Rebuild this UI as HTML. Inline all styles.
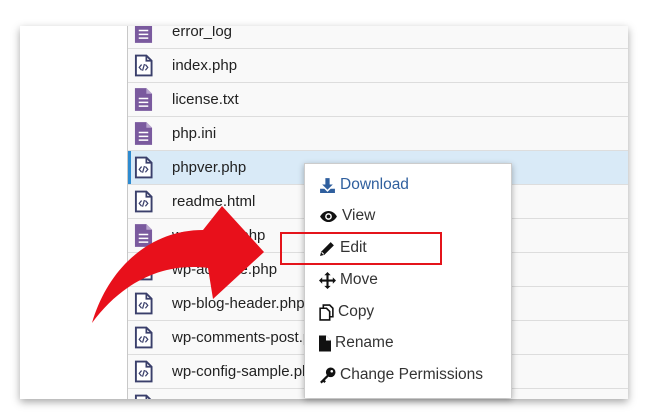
<!DOCTYPE html>
<html><head><style>
body{margin:0;width:650px;height:420px;background:#fff;position:relative;overflow:hidden;font-family:"Liberation Sans",Arial,sans-serif}
#panel{position:absolute;left:20px;top:26px;width:608px;height:373px;background:#fff;box-shadow:0 3px 8px rgba(0,0,0,.35);overflow:hidden}
#tbl{position:absolute;left:107px;top:-11px;width:501px;border-left:1px solid #c8c8c8}
.row{height:33px;border-bottom:1px solid #ddd;position:relative;font-size:15px;color:#222;background:#f9f9f9}
.row.sel{background:#d9eaf7;box-shadow:inset 3px 0 0 #2e8bd0}
.row span{position:absolute;left:44px;top:8px}
.row svg{position:absolute;left:6px;top:5px}
#menu{position:absolute;left:304px;top:163px;width:206px;height:234px;background:#fff;border:1px solid #ccc;border-bottom:none;box-shadow:0 2px 6px rgba(0,0,0,.3)}
.mi{position:absolute;left:14px;font-size:15.5px;color:#333;display:flex;align-items:center;gap:4px}
#box{position:absolute;left:280px;top:232px;width:158px;height:29px;border:2px solid #e4141b}
</style></head><body>
<div id="panel">
<div id="tbl"></div>
</div>
<svg width="0" height="0" style="position:absolute">
<defs>
<symbol id="code" viewBox="0 0 20 24"><path d="M2 1.5h11l5.5 5.5v15.5H2z" fill="#fff" stroke="#3a3f6b" stroke-width="2"/><path d="M13 1.5v5.5h5.5" fill="none" stroke="#3a3f6b" stroke-width="1.8"/><path d="M8 11l-2.5 3 2.5 3M12 11l2.5 3-2.5 3M11 10.5l-2 7" fill="none" stroke="#3a3f6b" stroke-width="1.3"/></symbol>
<symbol id="txt" viewBox="0 0 20 24"><path d="M1 0h12l6 6v18H1z" fill="#7a5a9e"/><path d="M13 0v6h6" fill="#b9a6cf"/><path d="M5 11h10M5 15h10M5 19h10" stroke="#fff" stroke-width="1.6"/></symbol>
</defs></svg>
<div id="menu">
<div class="mi" style="top:12px;color:#2f5f9e"><svg width="17" height="17" viewBox="0 0 16 16"><path d="M6 1h4v6h3l-5 5-5-5h3z" fill="#2f5f9e"/><path d="M1 11h4l3 3 3-3h4v4H1z" fill="#2f5f9e"/></svg>Download</div>
<div class="mi" style="top:43px"><svg width="19" height="15" viewBox="0 0 18 14"><path d="M1 7c4-7 12-7 16 0-4 7-12 7-16 0z" fill="#111"/><circle cx="9" cy="7" r="3.2" fill="#fff"/><circle cx="9" cy="7" r="1.8" fill="#111"/></svg>View</div>
<div class="mi" style="top:75px"><svg width="17" height="17" viewBox="0 0 16 16"><path d="M1 15l1-4 9-9 3 3-9 9z" fill="#111"/><path d="M2.5 11.5l2 2" stroke="#fff" stroke-width="1"/></svg>Edit</div>
<div class="mi" style="top:107px"><svg width="17" height="17" viewBox="0 0 16 16"><path d="M8 0l3 3H9v4h4V5l3 3-3 3V9H9v4h2l-3 3-3-3h2V9H3v2L0 8l3-3v2h4V3H5z" fill="#111"/></svg>Move</div>
<div class="mi" style="top:139px"><svg width="15" height="17" viewBox="0 0 14 16"><path d="M1 4h6l3 3v8H1z" fill="#fff" stroke="#111" stroke-width="1.5"/><path d="M4 4V1h6l3 3v8h-3" fill="none" stroke="#111" stroke-width="1.5"/></svg>Copy</div>
<div class="mi" style="top:170px"><svg width="12" height="17" viewBox="0 0 12 16"><path d="M0 0h7l5 5v11H0z" fill="#111"/><path d="M7 0v5h5" fill="#fff"/></svg>Rename</div>
<div class="mi" style="top:202px"><svg width="17" height="17" viewBox="0 0 16 16"><circle cx="11" cy="5" r="4.5" fill="#111"/><path d="M8 7L1 14l1.5 1.5L4 14l1 1 1.5-1.5-1-1L10 8z" fill="#111"/><circle cx="12" cy="4" r="1.2" fill="#fff"/></svg>Change Permissions</div>
</div>
<div id="box"></div>
<svg style="position:absolute;left:0;top:0" width="650" height="420"><path d="M92 323C108 268 150 230 203 230L222 206L264 252L213 299L208 268C160 262 120 285 92 323z" fill="#e8101b"/></svg>
<script>
var n=[['t','error_log'],['c','index.php'],['t','license.txt'],['t','php.ini'],['c','phpver.php',1],['c','readme.html'],['t','wp-config.php'],['c','wp-activate.php'],['c','wp-blog-header.php'],['c','wp-comments-post.php'],['c','wp-config-sample.php'],['c','wp-cron.php']];
var h='';n.forEach(function(r){h+='<div class="row'+(r[2]?' sel':'')+'"><svg width="19" height="23"><use href="#'+(r[0]=='t'?'txt':'code')+'"/></svg><span>'+r[1]+'</span></div>'});
document.getElementById('tbl').innerHTML=h;
</script>
</body></html>
